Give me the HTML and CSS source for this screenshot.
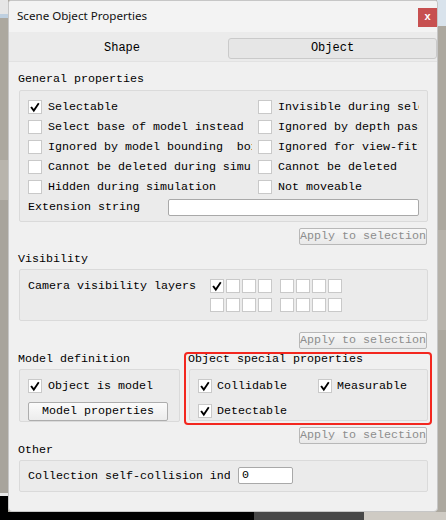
FILE: index.html
```html
<!DOCTYPE html>
<html>
<head>
<meta charset="utf-8">
<link rel="stylesheet" href="styles.css">
</head>
<body>
<div class="window">
  <div class="titlebar">
    <span class="title">Scene Object Properties</span>
    <span class="close">x</span>
  </div>
  <div class="tabs">
    <div class="tab shape">Shape</div>
    <div class="tab active">Object</div>
  </div>
  <div class="content">
    <div class="label l-general">General properties</div>
    <div class="group general">
      <div class="grid">
        <div class="row"><span class="cb checked"><svg viewBox="0 0 14 14"><path d="M3 7.2 L5.6 10.6 L10.8 2.8"/></svg></span><span class="txt">Selectable</span></div>
        <div class="row"><span class="cb"></span><span class="txt">Invisible during selection</span></div>
        <div class="row"><span class="cb"></span><span class="txt">Select base of model instead</span></div>
        <div class="row"><span class="cb"></span><span class="txt">Ignored by depth pass</span></div>
        <div class="row"><span class="cb"></span><span class="txt">Ignored by model bounding  box</span></div>
        <div class="row"><span class="cb"></span><span class="txt">Ignored for view-fitting</span></div>
        <div class="row"><span class="cb"></span><span class="txt">Cannot be deleted during simulation</span></div>
        <div class="row"><span class="cb"></span><span class="txt">Cannot be deleted</span></div>
        <div class="row"><span class="cb"></span><span class="txt">Hidden during simulation</span></div>
        <div class="row"><span class="cb"></span><span class="txt">Not moveable</span></div>
      </div>
      <div class="ext"><span class="ext-label">Extension string</span><span class="input ext-input"></span></div>
    </div>
    <div class="apply-row a1"><span class="apply">Apply to selection</span></div>

    <div class="label l-vis">Visibility</div>
    <div class="group vis">
      <span class="cam-label">Camera visibility layers</span>
      <div class="layers">
        <div class="layer-row">
          <div class="quad"><span class="lb checked"><svg viewBox="0 0 14 14"><path d="M3 7.2 L5.6 10.6 L10.8 2.8"/></svg></span><span class="lb"></span><span class="lb"></span><span class="lb"></span></div>
          <div class="quad"><span class="lb"></span><span class="lb"></span><span class="lb"></span><span class="lb"></span></div>
        </div>
        <div class="layer-row">
          <div class="quad"><span class="lb"></span><span class="lb"></span><span class="lb"></span><span class="lb"></span></div>
          <div class="quad"><span class="lb"></span><span class="lb"></span><span class="lb"></span><span class="lb"></span></div>
        </div>
      </div>
    </div>
    <div class="apply-row a2"><span class="apply">Apply to selection</span></div>

    <div class="split">
      <div class="model-col">
        <div class="label l-model">Model definition</div>
        <div class="group model">
          <div class="row"><span class="cb checked"><svg viewBox="0 0 14 14"><path d="M3 7.2 L5.6 10.6 L10.8 2.8"/></svg></span><span class="txt">Object is model</span></div>
          <span class="btn">Model properties</span>
        </div>
      </div>
      <div class="special">
        <div class="label l-special">Object special properties</div>
        <div class="group special-group">
          <div class="row"><span class="cb checked"><svg viewBox="0 0 14 14"><path d="M3 7.2 L5.6 10.6 L10.8 2.8"/></svg></span><span class="txt">Collidable</span></div>
          <div class="row"><span class="cb checked"><svg viewBox="0 0 14 14"><path d="M3 7.2 L5.6 10.6 L10.8 2.8"/></svg></span><span class="txt">Measurable</span></div>
          <div class="row"><span class="cb checked"><svg viewBox="0 0 14 14"><path d="M3 7.2 L5.6 10.6 L10.8 2.8"/></svg></span><span class="txt">Detectable</span></div>
        </div>
      </div>
    </div>
    <div class="apply-row a3"><span class="apply">Apply to selection</span></div>

    <div class="label l-other">Other</div>
    <div class="group other">
      <span class="coll-label">Collection self-collision indicator</span>
      <span class="input small-input">0</span>
    </div>
  </div>
</div>
</body>
</html>
```

FILE: styles.css
```css
html, body {
  margin: 0;
  padding: 0;
}
body {
  width: 446px;
  height: 520px;
  overflow: hidden;
  background:
    linear-gradient(to right, #000 0 254px, #474747 254px 364px, #cfcbc4 364px) left bottom / 100% 8px no-repeat,
    linear-gradient(to bottom, #e6e6e6 0 14px, #bfd0e0 14px 18px, #aca89f 18px 160px, #b8b4ac 160px 200px, #a8a49c 200px 493px, #e9e9e9 493px 496px, #000 496px) left top / 8px 100% no-repeat,
    linear-gradient(to bottom, #d9e3ec 0 26px, #aca89f 26px 230px, #b6b2aa 230px 330px, #aca89f 330px) right top / 9px 100% no-repeat,
    #aca89f;
}
.window {
  box-sizing: border-box;
  margin-left: 8px;
  width: 430px;
  height: 512px;
  background: #f0f0f0;
  border: 1px solid #c6c6c6;
  border-radius: 3px 3px 4px 4px;
  overflow: hidden;
  display: flex;
  flex-direction: column;
  font-family: "Liberation Mono", "DejaVu Sans Mono", monospace;
  font-size: 11.67px;
  color: #000;
}
.titlebar {
  height: 31px;
  flex-shrink: 0;
  background: #f3f3f3;
  display: flex;
  align-items: flex-start;
  justify-content: space-between;
}
.title {
  font-family: "Noto Sans", "Open Sans", sans-serif;
  font-size: 11.6px;
  line-height: 16px;
  margin-top: 7px;
  padding-left: 8px;
  color: #111;
}
.close {
  width: 19px;
  height: 19px;
  margin-top: 7px;
  background: #c75050;
  color: #fff;
  font-family: "Liberation Sans", sans-serif;
  font-weight: bold;
  font-size: 11px;
  line-height: 17px;
  text-align: center;
}
.tabs {
  height: 30px;
  box-sizing: border-box;
  flex-shrink: 0;
  background: #ebebeb;
  border-bottom: 1px solid #e2e2e2;
  display: grid;
  grid-template-columns: 219px 209px;
  padding-top: 6px;
}
.tab {
  height: 21px;
  line-height: 21px;
  text-align: center;
  font-size: 12px;
}
.tab.shape {
  padding-left: 7px;
}
.tab.active {
  box-sizing: border-box;
  border: 1px solid #cacaca;
  border-radius: 3px;
  background: #e6e6e6;
  line-height: 19px;
}
.content {
  padding: 0 9px 0 10px;
}
.label {
  line-height: 14px;
  height: 14px;
  margin-left: -1px;
  white-space: nowrap;
}
.l-general { margin-top: 10px; }
.l-vis { margin-top: 7px; }
.l-other { margin-top: -1px; }
.group {
  box-sizing: border-box;
  background: #ebebeb;
  border: 1px solid #dadada;
  border-radius: 2px;
}
.general {
  margin-top: 4px;
  height: 132px;
  padding: 6px 8px 0 8px;
}
.grid {
  display: grid;
  grid-template-columns: 224px 1fr;
  column-gap: 6px;
}
.row {
  height: 20px;
  display: flex;
  align-items: center;
  gap: 6px;
  white-space: nowrap;
  overflow: hidden;
}
.txt {
  overflow: hidden;
  white-space: pre;
}
.cb, .lb {
  box-sizing: border-box;
  flex-shrink: 0;
  width: 14px;
  height: 14px;
  background: #fff;
  border: 1px solid #c9c9c9;
  display: inline-flex;
  align-items: center;
  justify-content: center;
}
.cb svg, .lb svg {
  width: 13px;
  height: 13px;
}
.cb path, .lb path {
  fill: none;
  stroke: #000;
  stroke-width: 2.1;
  stroke-linecap: square;
  stroke-linejoin: miter;
}
.ext {
  height: 20px;
  display: flex;
  align-items: center;
}
.ext-label {
  width: 140px;
  flex-shrink: 0;
}
.input {
  box-sizing: border-box;
  height: 17px;
  background: #fff;
  border: 1px solid #a9a9a9;
  border-radius: 2px;
  line-height: 15px;
  padding-left: 3px;
}
.ext-input {
  width: 251px;
}
.apply-row {
  display: flex;
  justify-content: flex-end;
  padding-right: 1px;
}
.apply {
  box-sizing: border-box;
  width: 128px;
  height: 17px;
  line-height: 15px;
  text-align: center;
  color: #8d8d8d;
  border: 1px solid #b8b8b8;
  border-radius: 2px;
  background: linear-gradient(#f7f7f7, #e9e9e9);
  white-space: nowrap;
}
.a1 { margin-top: 6px; }
.a2 { margin-top: 11px; }
.a3 { margin-top: 2px; }
.vis {
  margin-top: 3px;
  height: 52px;
  padding: 9px 8px 0 8px;
  display: flex;
  align-items: flex-start;
}
.cam-label {
  width: 182px;
  flex-shrink: 0;
  line-height: 14px;
}
.layers {
  display: flex;
  flex-direction: column;
  gap: 5px;
}
.layer-row {
  display: flex;
  gap: 8px;
}
.quad {
  display: flex;
  gap: 2px;
}
.split {
  margin-top: 3px;
  display: flex;
  gap: 4px;
}
.model-col {
  width: 161px;
  flex-shrink: 0;
}
.model {
  margin-top: 3px;
  height: 53px;
  padding: 6px 8px 0 8px;
}
.btn {
  display: block;
  box-sizing: border-box;
  margin-top: 6px;
  width: 140px;
  height: 19px;
  line-height: 17px;
  text-align: center;
  border: 1px solid #adadad;
  border-radius: 2px;
  background: linear-gradient(#fbfbfb, #ececec);
}
.special {
  box-sizing: border-box;
  width: 248px;
  height: 73px;
  flex-shrink: 0;
  border: 2px solid #f3271f;
  border-radius: 4px;
  padding: 0 2px 0 2px;
}
.l-special {
  margin-left: 0;
  margin-top: -1px;
  line-height: 12px;
  height: 12px;
}
.special-group {
  margin: 4px 0 0 1px;
  height: 52px;
  padding: 6px 8px 0 8px;
  display: grid;
  grid-template-columns: 120px 1fr;
  row-gap: 5px;
}
.special-group .row {
  gap: 5px;
}
.other {
  margin-top: 3px;
  height: 32px;
  padding: 5px 8px 0 8px;
  display: flex;
  align-items: flex-start;
}
.coll-label {
  width: 202px;
  flex-shrink: 0;
  overflow: hidden;
  white-space: nowrap;
  line-height: 20px;
}
.small-input {
  margin-left: 8px;
  margin-top: 1px;
  width: 55px;
}
```
